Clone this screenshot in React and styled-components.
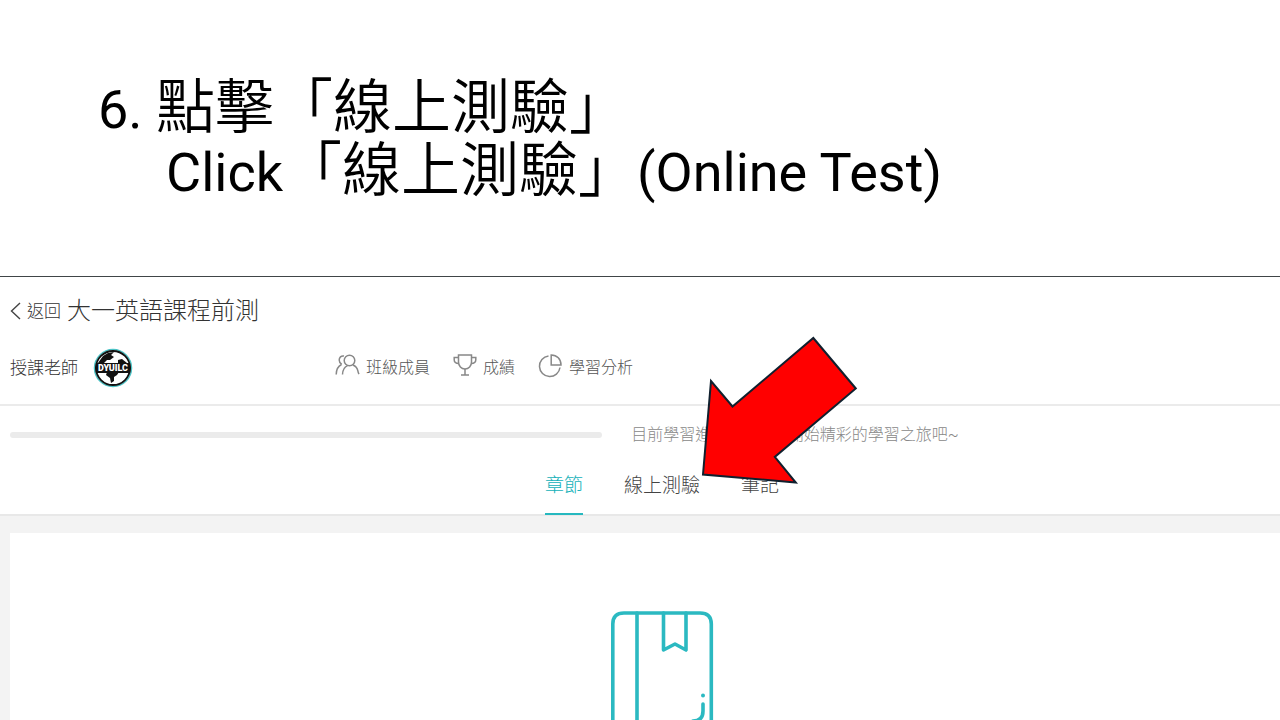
import React, { useState } from "react";
import styled, { createGlobalStyle } from "styled-components";

const GlobalStyle = createGlobalStyle`
  * {
    box-sizing: border-box;
  }

  body {
    margin: 0;
    background: white;
    font-family: Roboto, "Noto Sans CJK TC", sans-serif;
    font-weight: 300;
    line-height: 24px;
  }

  h1, h2, p {
    margin: 0;
    font-weight: inherit;
  }
`;

const Slide = styled.div`
  display: flex;
  flex-direction: column;
  height: 100vh;
  overflow: hidden;
`;

const SlideTitle = styled.h1`
  padding: 76px 98px 74px;
  font-size: 59px;
  font-weight: 350;
  line-height: 63px;
  color: black;
`;

const TitleLine = styled.span`
  display: block;
  white-space: nowrap;
  padding-left: ${(props) => (props.$indent ? "68px" : "0")};
`;

const Latin = styled.span`
  font-size: 54px;
  font-weight: 400;
  line-height: 1;
`;

const Screen = styled.section`
  position: relative;
  flex: 1;
  display: flex;
  flex-direction: column;
  border-top: 1px solid #404548;
`;

const CourseHeader = styled.header`
  padding: 16px 10px;
  border-bottom: 2px solid #ebebeb;
`;

const TitleRow = styled.div`
  display: flex;
  align-items: center;
  gap: 6px;
  height: 36px;
  color: #333;

  h2 {
    font-size: 24px;
    line-height: 36px;
  }
`;

const BackLink = styled.a`
  display: flex;
  align-items: center;
  gap: 6px;
  font-size: 17px;
  color: inherit;
  text-decoration: none;
`;

const InfoRow = styled.div`
  display: flex;
  align-items: center;
  height: 40px;
  margin-top: 19px;
`;

const Teacher = styled.div`
  display: flex;
  align-items: center;
  gap: 15px;
  flex: 0 0 325px;
  font-size: 17px;
  color: #333;
`;

const CourseNav = styled.nav`
  display: flex;
  gap: 23px;
`;

const NavLink = styled.a`
  display: flex;
  align-items: center;
  gap: 6px;
  font-size: 16px;
  color: #555;
  text-decoration: none;

  svg {
    margin-bottom: 4px;
  }
`;

const ProgressRow = styled.div`
  display: flex;
  align-items: center;
  gap: 29px;
  padding: 17px 10px 0;
  font-size: 16px;
  color: #888;
  white-space: nowrap;
`;

const ProgressTrack = styled.div`
  flex: 0 0 47%;
  height: 6px;
  border-radius: 3px;
  background: #ebebeb;
`;

const Tabs = styled.div`
  display: flex;
  justify-content: center;
  gap: 41px;
  padding: 19px 0 0 44px;
  border-bottom: 2px solid #e8e8e8;
`;

const Tab = styled.button`
  padding: 8px 0 15px;
  margin-bottom: -1px;
  border: 0;
  border-bottom: 2px solid ${(props) => (props.$active ? "#26b8bf" : "transparent")};
  background: none;
  font: inherit;
  font-size: 19px;
  color: ${(props) => (props.$active ? "#12b0b8" : "#444")};
  cursor: pointer;
`;

const Content = styled.main`
  flex: 1;
  display: flex;
  min-height: 0;
  padding: 17px 0 0 10px;
  background: #f3f3f3;
`;

const Card = styled.div`
  flex: 1;
  display: flex;
  justify-content: center;
  align-items: flex-start;
  padding: 77px 0 0 34px;
  background: white;
  overflow: hidden;
`;

const Pointer = styled.svg`
  position: absolute;
  top: 59px;
  left: 700px;
  pointer-events: none;
`;

const LineIcon = ({ children, width = 24, height = 24 }) => (
  <svg
    width={width}
    height={height}
    viewBox={`0 0 ${width} ${height}`}
    fill="none"
    stroke="#888"
    strokeWidth="1.5"
    aria-hidden="true"
  >
    {children}
  </svg>
);

const MembersIcon = () => (
  <LineIcon width={25}>
    <circle cx="14.500" cy="6.500" r="5.3" />
    <path d="M7.5 20.500c.2-5 2.2-7.700 5-8.900M18 11c2.800 1.200 4.300 3.200 4.800 5.700.2 1.200.5 2.300 1.200 3.400" />
    <path d="M9 2C6 1.400 4.200 3.700 4.200 6c0 2 .9 3.400 2.600 4.400M6.500 10.500C3 12.200 1.300 15.500 1.200 20.500" />
  </LineIcon>
);

const TrophyIcon = () => (
  <LineIcon>
    <path d="M5.5 1h13v7c0 4-2.8 7-6.5 7s-6.5-3-6.5-7z" />
    <path d="M5.5 3.5H1.2v2.3c0 2.3 1.5 3.7 4.6 3.7M18.5 3.500h4.3v2.3c0 2.3-1.5 3.7-4.6 3.7M12 15v5.8M8 21h8" />
  </LineIcon>
);

const ChartIcon = () => (
  <LineIcon width={25} height={25}>
    <path d="M10.5 2A10.3 10.3 0 1 0 22 13.500" />
    <path d="M13.2 1v10h9.800c0-5.800-4-10-9.800-10z" />
  </LineIcon>
);

const TeacherAvatar = () => (
  <svg width="40" height="40" viewBox="0 0 40 40" role="img" aria-label="DYUILC">
    <circle cx="20" cy="20" r="18.5" fill="white" stroke="#4cc3c6" strokeWidth="1.5" />
    <circle cx="20" cy="20" r="17" fill="white" stroke="#111" strokeWidth="1.8" />
    <path d="M10 8l5-3 6-1-3 3 3 2-4 3-3 0-3 3H5zM25 12l4-1 5 4h-9z" fill="#111" />
    <path d="M14 24h12l-2 3-3 2 0 4-3 2-1-5-4-3z" fill="#111" />
    <path d="M3 15h34l1 5-1 5H3l-1-5z" fill="#111" />
    <text x="20" y="23" textAnchor="middle" fontFamily="Roboto" fontSize="9" fontWeight="900" fill="white">
      DYUILC
    </text>
  </svg>
);

const BookIcon = () => (
  <svg
    width="104"
    height="134"
    viewBox="0 0 104 134"
    fill="none"
    stroke="#2bb9c1"
    strokeWidth="3.6"
    strokeLinecap="round"
    strokeLinejoin="round"
    aria-hidden="true"
  >
    <path d="M2.8 122V14Q2.8 3 14 3h76q11.3 0 11.3 11v108q0 9-11.3 9H14q-11.2 0-11.2-9z" />
    <path d="M27 3v128M53.5 3v37L65 34l11 6V3" />
    <path d="M93 94v7q0 10-10 10" />
    <circle cx="93" cy="85.5" r="2" fill="#2bb9c1" stroke="none" />
  </svg>
);

const tabs = ["章節", "線上測驗", "筆記"];

const App = () => {
  const [activeTab, setActiveTab] = useState(tabs[0]);

  return (
    <Slide>
      <GlobalStyle />
      <SlideTitle>
        <TitleLine>
          <Latin>6. </Latin>點擊「線上測驗」
        </TitleLine>
        <TitleLine $indent>
          <Latin>Click</Latin>「線上測驗」<Latin>(Online Test)</Latin>
        </TitleLine>
      </SlideTitle>
      <Screen>
        <CourseHeader>
          <TitleRow>
            <BackLink href="#courses">
              <svg width="11" height="18" viewBox="0 0 11 18" fill="none" stroke="#444" strokeWidth="1.4">
                <path d="M10 1L1.5 9l8.5 8" />
              </svg>
              返回
            </BackLink>
            <h2>大一英語課程前測</h2>
          </TitleRow>
          <InfoRow>
            <Teacher>
              授課老師
              <TeacherAvatar />
            </Teacher>
            <CourseNav>
              <NavLink href="#members">
                <MembersIcon />
                班級成員
              </NavLink>
              <NavLink href="#grades">
                <TrophyIcon />
                成績
              </NavLink>
              <NavLink href="#analysis">
                <ChartIcon />
                學習分析
              </NavLink>
            </CourseNav>
          </InfoRow>
        </CourseHeader>
        <ProgressRow>
          <ProgressTrack role="progressbar" aria-label="學習進度" aria-valuenow={0} />
          <p>目前學習進度為 0% ，開始精彩的學習之旅吧~</p>
        </ProgressRow>
        <Tabs role="tablist">
          {tabs.map((tab) => (
            <Tab
              key={tab}
              type="button"
              role="tab"
              aria-selected={tab === activeTab}
              $active={tab === activeTab}
              onClick={() => setActiveTab(tab)}
            >
              {tab}
            </Tab>
          ))}
        </Tabs>
        <Content>
          <Card>
            <BookIcon />
          </Card>
        </Content>
        <Pointer width="160" height="150" viewBox="0 0 160 150" aria-hidden="true">
          <path
            d="M113.3 2L155.8 52.5 74.8 121l21 25.5L3 138.5 11 45l21.5 25.5z"
            fill="#ff0000"
            stroke="#10202e"
            strokeWidth="2"
          />
        </Pointer>
      </Screen>
    </Slide>
  );
};

export default App;
